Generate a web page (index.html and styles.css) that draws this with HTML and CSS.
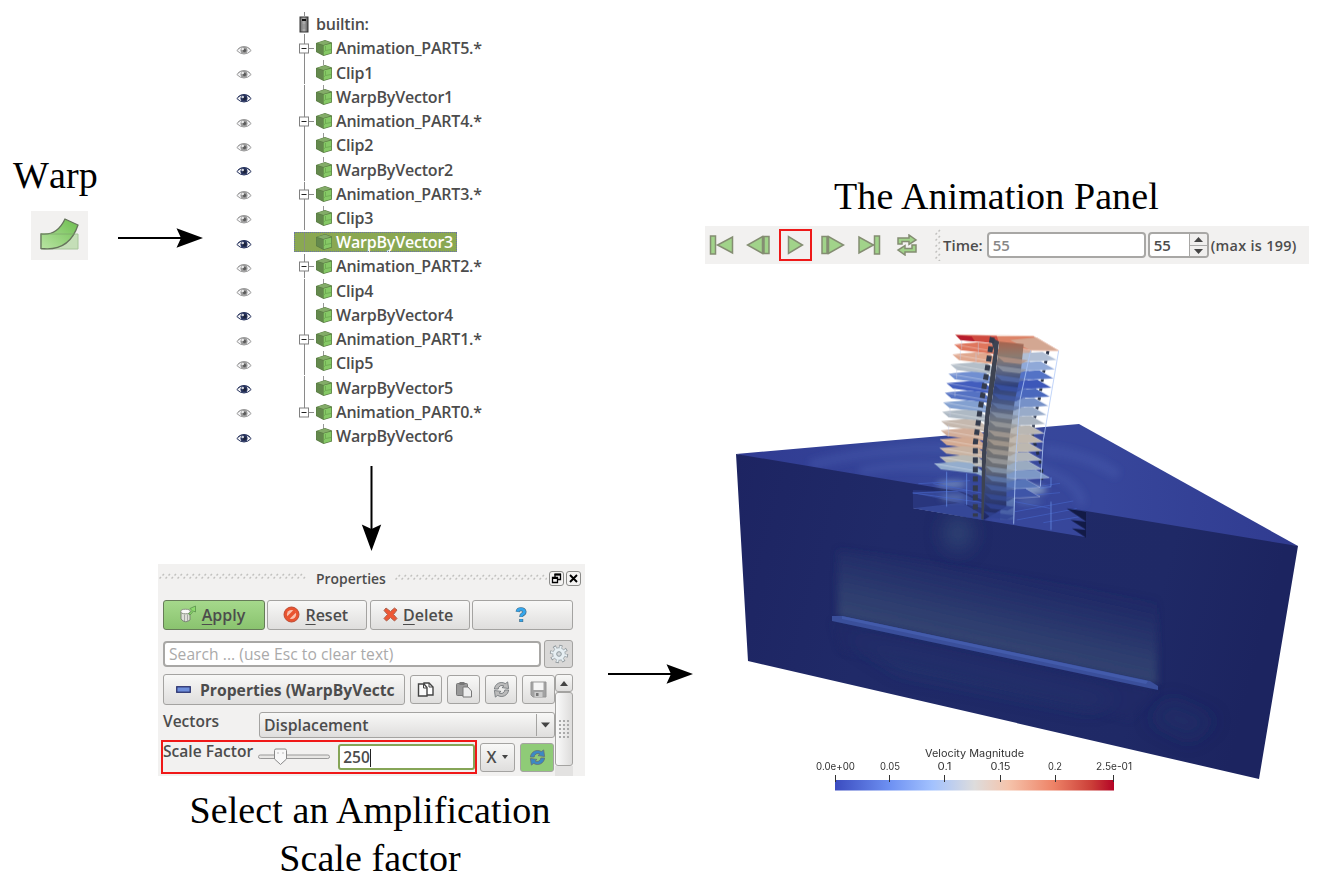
FILE: index.html
```html
<!DOCTYPE html>
<html lang="en">
<head>
<meta charset="utf-8">
<title>Warp and animation workflow</title>
<link rel="stylesheet" href="styles.css">
</head>
<body>
<svg class="defs" aria-hidden="true">
  <defs>
    <linearGradient id="leaf" x1="0" y1="1" x2="1" y2="0"><stop offset="0" stop-color="#b9e5a3"/><stop offset="1" stop-color="#6cbd4e"/></linearGradient>
    <linearGradient id="metal" x1="0" x2="1"><stop offset="0" stop-color="#666"/><stop offset=".5" stop-color="#b5b5b5"/><stop offset="1" stop-color="#555"/></linearGradient>
    <symbol id="eye" viewBox="0 0 16 12"><path d="M.8 6.5Q4 2.600 8 2.600T15.200 6.500Q12 10 8 10T.8 6.500Z" fill="#f5f5f7" stroke="currentColor" stroke-width="1"/><path d="M2 4.800Q8 .2 14 4.800" fill="none" stroke="currentColor" stroke-width=".8"/><circle cx="8" cy="6.300" r="3.500" fill="currentColor"/><circle cx="8.500" cy="6.500" r="1.700" fill="#111" fill-opacity=".45"/><circle cx="6.700" cy="5" r="1.300" fill="#fff" fill-opacity=".8"/></symbol>
    <symbol id="cube" viewBox="0 0 18 18"><path d="M1 4 10 1 17 3.5V14.5L8.5 17 1 13Z" fill="#597a42"/><path d="M1.500 4.500 8 6.500V16L1.500 12.600Z" fill="#64894d"/><path d="M2 4 10 1.600 16 3.700 8.500 6Z" fill="#83ac68"/><path d="M8.600 6.600 16.300 4.400V14L8.600 16.300Z" fill="#86c966"/><path d="M10.500 7V11.500L8.600 13M10.500 11.500 16 10.500" fill="none" stroke="#6aa64e" stroke-width=".8"/></symbol>
    <symbol id="node" viewBox="0 0 21 24.235"><path d="M10.500 0V24.300M15 12.500H20" stroke="#8a8a8a"/><rect x="5.500" y="8" width="9" height="9" fill="#fff" stroke="#808080"/><path d="M7.500 12.500H12.500" stroke="#222" stroke-width="1.200"/></symbol>
    <symbol id="last" viewBox="0 0 21 24.235"><path d="M10.500 0V12M15 12.500H20" stroke="#8a8a8a"/><rect x="5.500" y="8" width="9" height="9" fill="#fff" stroke="#808080"/><path d="M7.500 12.500H12.500" stroke="#222" stroke-width="1.200"/></symbol>
    <symbol id="trunk" viewBox="0 0 21 24.235"><path d="M10.500 0V24.300" stroke="#8a8a8a"/></symbol>
    <symbol id="arrow" viewBox="0 0 86 22"><path d="M0 11H65" stroke="#000" stroke-width="2"/><path d="M85 11 58.500 1.300 63 11 58.500 20.700Z"/></symbol>
    <symbol id="cycle" viewBox="0 0 20 20"><path d="M2.500 9.500A7.500 7.500 0 0 1 14 3.800L16.500 2 17.500 9 10.500 8 12.500 6.300A4 4 0 0 0 6.500 9.500ZM17.500 10.500A7.500 7.500 0 0 1 6 16.200L3.500 18 2.500 11 9.500 12 7.500 13.700A4 4 0 0 0 13.500 10.500Z" fill="currentColor" stroke="#676d70" stroke-width=".8"/></symbol>
  </defs>
</svg>
<main class="figure">
  <section class="flow">
    <div class="sources">
      <div class="warp">
        <h2>Warp</h2>
        <div class="warp-icon"><svg width="57" height="49" viewBox="0 0 57 49"><path d="M10 23H47V38H10Z" fill="#a7d492" fill-opacity=".6" stroke="#a6c59a"/><path d="M10 23Q26 25 34 8L47 14Q38 41 10 37.500Z" fill="url(#leaf)" stroke="#66745c" stroke-width="1.300"/><path d="M10 23H44" stroke="#7fa66c" stroke-opacity=".7"/></svg></div>
      </div>
      <svg class="arrow-tree" width="86" height="22"><use href="#arrow"/></svg>
      <ul class="tree">
        <li class="root"><i></i><span class="node"><svg class="branch" viewBox="0 0 21 24.235"><path d="M10.500 0V4M10.500 22V24.300" stroke="#8a8a8a"/><rect x="6" y="5" width="8" height="15" fill="url(#metal)" stroke="#333"/><path d="M8 8H12" stroke="#111" stroke-width="2"/><path d="M9 12V17M11 12V17" stroke="#888"/></svg><b>builtin:</b></span></li>
        <li><svg class="eye"><use href="#eye"/></svg><span class="node"><svg class="branch"><use href="#node"/></svg><svg class="cube"><use href="#cube"/></svg><b>Animation_PART5.*</b></span></li>
        <li class="sub"><svg class="eye"><use href="#eye"/></svg><span class="node"><svg class="branch"><use href="#trunk"/></svg><svg class="cube"><use href="#cube"/></svg><b>Clip1</b></span></li>
        <li class="sub on"><svg class="eye"><use href="#eye"/></svg><span class="node"><svg class="branch"><use href="#trunk"/></svg><svg class="cube"><use href="#cube"/></svg><b>WarpByVector1</b></span></li>
        <li><svg class="eye"><use href="#eye"/></svg><span class="node"><svg class="branch"><use href="#node"/></svg><svg class="cube"><use href="#cube"/></svg><b>Animation_PART4.*</b></span></li>
        <li class="sub"><svg class="eye"><use href="#eye"/></svg><span class="node"><svg class="branch"><use href="#trunk"/></svg><svg class="cube"><use href="#cube"/></svg><b>Clip2</b></span></li>
        <li class="sub on"><svg class="eye"><use href="#eye"/></svg><span class="node"><svg class="branch"><use href="#trunk"/></svg><svg class="cube"><use href="#cube"/></svg><b>WarpByVector2</b></span></li>
        <li><svg class="eye"><use href="#eye"/></svg><span class="node"><svg class="branch"><use href="#node"/></svg><svg class="cube"><use href="#cube"/></svg><b>Animation_PART3.*</b></span></li>
        <li class="sub"><svg class="eye"><use href="#eye"/></svg><span class="node"><svg class="branch"><use href="#trunk"/></svg><svg class="cube"><use href="#cube"/></svg><b>Clip3</b></span></li>
        <li class="sub on selected"><svg class="eye"><use href="#eye"/></svg><span class="node"><svg class="branch"><use href="#trunk"/></svg><svg class="cube"><use href="#cube"/></svg><b>WarpByVector3</b></span></li>
        <li><svg class="eye"><use href="#eye"/></svg><span class="node"><svg class="branch"><use href="#node"/></svg><svg class="cube"><use href="#cube"/></svg><b>Animation_PART2.*</b></span></li>
        <li class="sub"><svg class="eye"><use href="#eye"/></svg><span class="node"><svg class="branch"><use href="#trunk"/></svg><svg class="cube"><use href="#cube"/></svg><b>Clip4</b></span></li>
        <li class="sub on"><svg class="eye"><use href="#eye"/></svg><span class="node"><svg class="branch"><use href="#trunk"/></svg><svg class="cube"><use href="#cube"/></svg><b>WarpByVector4</b></span></li>
        <li><svg class="eye"><use href="#eye"/></svg><span class="node"><svg class="branch"><use href="#node"/></svg><svg class="cube"><use href="#cube"/></svg><b>Animation_PART1.*</b></span></li>
        <li class="sub"><svg class="eye"><use href="#eye"/></svg><span class="node"><svg class="branch"><use href="#trunk"/></svg><svg class="cube"><use href="#cube"/></svg><b>Clip5</b></span></li>
        <li class="sub on"><svg class="eye"><use href="#eye"/></svg><span class="node"><svg class="branch"><use href="#trunk"/></svg><svg class="cube"><use href="#cube"/></svg><b>WarpByVector5</b></span></li>
        <li><svg class="eye"><use href="#eye"/></svg><span class="node"><svg class="branch"><use href="#last"/></svg><svg class="cube"><use href="#cube"/></svg><b>Animation_PART0.*</b></span></li>
        <li class="sub on"><svg class="eye"><use href="#eye"/></svg><span class="node"><svg class="branch"></svg><svg class="cube"><use href="#cube"/></svg><b>WarpByVector6</b></span></li>
      </ul>
    </div>
    <div class="down"><svg width="22" height="86" viewBox="0 0 22 86"><path d="M10.500 0V65" stroke="#000" stroke-width="2"/><path d="M10.500 85 .8 58.500 10.500 63 20.200 58.500Z"/></svg></div>
    <div class="settings">
      <div class="panel">
        <header><svg class="g1" width="147" height="6"><rect width="147" height="6" fill="url(#dots)"/></svg><b>Properties</b><svg class="g2" width="152" height="6"><defs><pattern id="dots" width="6" height="6" patternUnits="userSpaceOnUse"><path d="M.5 5.500 2 4M3.500 2.500 5 1" stroke="#c2c1bf" stroke-width="1.500"/></pattern></defs><rect width="152" height="6" fill="url(#dots)"/></svg>
          <svg width="15" height="15" viewBox="0 0 15 15"><rect x=".5" y=".5" width="14" height="14" rx="2.500" fill="#f4f3f2" stroke="#8b8b89"/><path d="M6 6V3.500H11.500V8.500H9M3.500 6.500H8.500V11.500H3.500Z" fill="none" stroke="#000" stroke-width="1.300"/><path d="M5.500 3.500H12M3 7H9" stroke="#000" stroke-width="2"/></svg>
          <svg width="15" height="15" viewBox="0 0 15 15"><rect x=".5" y=".5" width="14" height="14" rx="2.500" fill="#f4f3f2" stroke="#8b8b89"/><path d="M4 4 11 11M11 4 4 11" stroke="#000" stroke-width="1.900"/></svg>
        </header>
        <div class="actions">
          <div class="btn apply"><svg width="17" height="20" viewBox="0 0 17 20"><path d="M1 6V14Q5 19 10 15V6" fill="#dde0d8" stroke="#7c8677"/><ellipse cx="5.500" cy="6.500" rx="4.700" ry="2.300" fill="#fafafa" stroke="#8b9385"/><path d="M4.500 9.500V16M7.500 9.500V16" stroke="#a5a5a5"/><path d="M8.500 9 12 5.500 10 3.500 15.500 1V7L13.500 6 10 10Z" fill="#8ddb6c" stroke="#5a914c" stroke-width=".8"/></svg><span><u>A</u>pply</span></div>
          <div class="btn"><svg width="17" height="19" viewBox="0 0 17 19"><circle cx="8.500" cy="8.500" r="7.500" fill="#e9532f" stroke="#bd4b34"/><circle cx="8.500" cy="8.500" r="4.600" fill="#f9c2af"/><path d="M5 12 12 5" stroke="#e9532f" stroke-width="3.500"/></svg><span><u>R</u>eset</span></div>
          <div class="btn"><svg width="15" height="17" viewBox="0 0 15 17"><path d="M3 1 7.500 4.500 11.500 1 14 3 10.500 7.500 14 11.500 11.500 14 7.500 10.500 3.500 14 1 11.500 4.500 7.500 1 3.500Z" fill="#ee5835" stroke="#ac6450"/></svg><span><u>D</u>elete</span></div>
          <div class="btn help"><svg width="12" height="16" viewBox="0 0 12 16"><path d="M2.500 4.800Q3 2.200 6 2.200T9.500 4.700Q9.500 6.500 7.500 7.300 6.200 8 6.200 10M6.200 12V15" fill="none" stroke="#476e87" stroke-width="4"/><path d="M2.500 4.500Q3 2.200 6 2.200T9.500 4.700Q9.500 6.500 7.500 7.300 6.200 8 6.200 9.700M6.200 12.300V14.600" fill="none" stroke="#35a7ed" stroke-width="2.700"/></svg></div>
        </div>
        <div class="search"><div class="field">Search ... (use Esc to clear text)</div><div class="btn gear"><svg width="20" height="20" viewBox="0 0 20 20"><circle cx="10" cy="10" r="7.300" fill="none" stroke="#92999d" stroke-width="3.800" stroke-dasharray="3 2.730"/><circle cx="10" cy="10" r="6.300" fill="#e7eff3" stroke="#a3adb2"/><circle cx="10" cy="10" r="6.800" fill="none" stroke="#e7eff3" stroke-width="3" stroke-dasharray="1.800 3.540" stroke-dashoffset="-.5"/><circle cx="10" cy="10" r="2.300" fill="#d2d7da" stroke="#8e999e"/></svg></div></div>
        <div class="body">
          <div class="form">
            <div class="group-row">
              <div class="btn group"><svg width="15" height="7" viewBox="0 0 15 7"><rect x=".75" y=".75" width="13.500" height="5.500" fill="#6e8edb" stroke="#29316e" stroke-width="1.300"/></svg><b>Properties (WarpByVectc</b></div>
              <div class="btn tool"><svg width="18" height="18" viewBox="0 0 18 18"><path d="M7 2H12L16 6V14H7Z" fill="#fff" stroke="#444" stroke-width="1.400"/><path d="M1.500 3H7L10 6.500V15H1.500Z" fill="#fafafa" stroke="#444" stroke-width="1.400"/><path d="M6.500 3V7H10M12 2V6H16" fill="none" stroke="#444"/></svg></div>
              <div class="btn tool"><svg width="18" height="18" viewBox="0 0 18 18"><rect x="1.500" y="2.500" width="11" height="12" rx="1" fill="#999" stroke="#777"/><rect x="4.500" y="1" width="5" height="3" fill="#777"/><path d="M8 6H13L16.500 10V16H8Z" fill="#eee" stroke="#777"/></svg></div>
              <div class="btn tool dim"><svg width="19" height="19"><use href="#cycle"/></svg></div>
              <div class="btn tool"><svg width="17" height="17" viewBox="0 0 17 17"><path d="M1 1H16V16H3L1 14Z" fill="#a2a2a2" stroke="#959595"/><rect x="3.500" y="1.500" width="10" height="7.500" fill="#f5f5f5"/><rect x="4.500" y="11" width="8" height="5" fill="#ccc"/><rect x="6" y="12" width="2.500" height="3" fill="#777"/></svg></div>
            </div>
            <div class="vectors"><label>Vectors</label><div class="btn combo"><span>Displacement</span><i><svg width="9" height="6"><path d="M0 .5H9L4.500 5.500Z" fill="#444"/></svg></i></div></div>
            <div class="scale">
              <div class="marked"><label>Scale Factor</label><svg width="72" height="20" viewBox="0 0 72 20"><rect x=".5" y="8" width="71" height="3.500" rx="1.700" fill="#e8e7e5" stroke="#999"/><path d="M16.500 3.500Q16.500 2 18 2H27Q28.500 2 28.500 3.500V12L22.500 17.500 16.500 12Z" fill="#f8f8f8" stroke="#888"/><path d="M20 5V7M25 5V7" stroke="#bbb"/></svg><div class="value">250</div></div>
              <div class="btn times"><b>X</b><svg width="6" height="4"><path d="M0 0H6L3 4Z" fill="#444"/></svg></div>
              <div class="btn refresh"><svg width="19" height="19"><use href="#cycle"/></svg></div>
            </div>
          </div>
          <div class="scroll"><div class="btn up"><svg width="8" height="5"><path d="M0 5H8L4 0Z" fill="#444"/></svg></div><div class="btn thumb"><span></span></div><div class="rest"></div></div>
        </div>
      </div>
      <svg class="arrow-view" width="86" height="22"><use href="#arrow"/></svg>
    </div>
    <h2 class="caption">Select an Amplification<br>Scale factor</h2>
  </section>

  <section class="result">
    <h2>The Animation Panel</h2>
    <div class="player">
      <svg width="25" height="22" viewBox="0 0 25 22"><path d="M1.500 2H6.500V20H1.500ZM23.500 3V19L8.500 11Z"/></svg>
      <svg width="25" height="22" viewBox="0 0 25 22"><path d="M16.500 2.500V19.500L1.500 11ZM18 2.500H23V19.500H18Z"/></svg>
      <div class="play"><svg width="17" height="20" viewBox="0 0 17 20"><path d="M1.500 1.500V18.500L15.500 10Z"/></svg></div>
      <svg width="25" height="22" viewBox="0 0 25 22"><path d="M8.500 2.500V19.500L23.500 11ZM2 2.500H7V19.500H2Z"/></svg>
      <svg width="25" height="22" viewBox="0 0 25 22"><path d="M2 3V19L16.500 11ZM17.500 2H22.500V20H17.500Z"/></svg>
      <svg width="22" height="22" viewBox="0 0 22 22"><path d="M2 10V4H13V1L20 6 13 10.500V7.500H6V10ZM20 11V18H9V21L2 16 9 11.500V14.500H16V11Z"/></svg>
      <svg class="vertical" width="6" height="32"><rect width="6" height="32" fill="url(#dots)"/></svg>
      <label>Time:</label><div class="field time">55</div>
      <div class="field spin"><b>55</b><span><i><svg width="9" height="5"><path d="M0 5H9L4.500 0Z" fill="#444"/></svg></i><i><svg width="9" height="5"><path d="M0 0H9L4.500 5Z" fill="#444"/></svg></i></span></div>
      <label>(max is 199)</label>
    </div>
    <svg class="view" width="629" height="500" viewBox="700 300 629 500">
      <defs>
        <linearGradient id="top" x1="0" x2="1"><stop offset="0" stop-color="#303b92"/><stop offset=".4" stop-color="#37489b"/><stop offset=".65" stop-color="#37469b"/><stop offset="1" stop-color="#303b90"/></linearGradient>
        <linearGradient id="front" x1="0" x2="1" y2=".15"><stop offset="0" stop-color="#1d2462"/><stop offset=".3" stop-color="#202a68"/><stop offset=".8" stop-color="#1f2966"/><stop offset="1" stop-color="#1c2460"/></linearGradient>
        <linearGradient id="glow" gradientUnits="userSpaceOnUse" x1="990" y1="655" x2="1010" y2="565"><stop offset="0" stop-color="#354671"/><stop offset=".35" stop-color="#304070" stop-opacity=".85"/><stop offset=".7" stop-color="#29376d" stop-opacity=".5"/><stop offset="1" stop-color="#212b67" stop-opacity="0"/></linearGradient>
        <linearGradient id="core" x1="0" y1="0" x2="0" y2="1"><stop offset="0" stop-color="#a7644e"/><stop offset=".08" stop-color="#8d7b70"/><stop offset=".15" stop-color="#646c83"/><stop offset=".25" stop-color="#2e407c"/><stop offset=".34" stop-color="#475783"/><stop offset=".43" stop-color="#6d7481"/><stop offset=".57" stop-color="#777472"/><stop offset=".7" stop-color="#6b6f76"/><stop offset=".8" stop-color="#3d4c7b"/><stop offset="1" stop-color="#1c2664"/></linearGradient>
        <linearGradient id="infill" x1="0" y1="0" x2="0" y2="1"><stop offset="0" stop-color="#dca48b"/><stop offset=".1" stop-color="#b7b9c2"/><stop offset=".24" stop-color="#4560bb"/><stop offset=".34" stop-color="#5875bf"/><stop offset=".46" stop-color="#9fadc0"/><stop offset=".6" stop-color="#bdb6ad"/><stop offset=".73" stop-color="#aeb3b6"/><stop offset=".85" stop-color="#6681b8"/><stop offset="1" stop-color="#3e549f"/></linearGradient>
        <linearGradient id="bar"><stop offset="0" stop-color="#3b4cc0"/><stop offset=".2" stop-color="#6f92f3"/><stop offset=".35" stop-color="#a3c2fe"/><stop offset=".5" stop-color="#dddcdc"/><stop offset=".62" stop-color="#f5c4ac"/><stop offset=".78" stop-color="#ee8468"/><stop offset=".92" stop-color="#cb3e38"/><stop offset="1" stop-color="#b40426"/></linearGradient>
        <filter id="soft" x="-30%" y="-30%" width="160%" height="160%"><feGaussianBlur stdDeviation="9"/></filter>
        <filter id="edge" x="-5%" y="-15%" width="110%" height="130%"><feGaussianBlur stdDeviation="3.500"/></filter>
        <clipPath id="soil"><path d="M736 454 1079 424 1298 546 1259 779 748 661Z"/></clipPath>
        <g id="wing"><path d="M0 0 70-6 112-2 150 26 150 40 125 30 20 17Z"/><path d="M0 0 150 26" fill="none" stroke="#fff" stroke-opacity=".5" stroke-width="2"/></g>
        <g id="fin"><path d="M0 0-42-24-110-20-150-13-120 3-60 4Z"/><path d="M0 0-60 4-120 3M0 0-42-24" fill="none" stroke="#eef2ff" stroke-opacity=".5" stroke-width="2"/></g>
        <path id="lip" d="M0 0 92 13 70 24 20 18Z"/>
      </defs>
      <path d="M736 454 1079 424 1298 546 1086 540 983 522 900 500Z" fill="url(#top)"/>
      <g clip-path="url(#soil)"><g filter="url(#edge)" fill="none" stroke="#5068b5" stroke-opacity=".3"><path d="M810 465Q880 447 950 448M1045 450Q1090 455 1118 475" stroke-width="10"/><path d="M860 471Q900 463 950 467M1035 468Q1080 480 1082 505" stroke-width="9"/></g></g>
      <path d="M736 454 963 492 913 493V508L983 520 1085 537 1086 511 1298 546 1259 779 748 661Z" fill="url(#front)"/>
      <g clip-path="url(#soil)"><g filter="url(#soft)"><ellipse cx="958" cy="533" rx="15" ry="18" fill="#334875" opacity=".75"/><path d="M846 635 1120 698 1090 708 900 670Z" fill="#293a70" opacity=".6"/><path d="M1170 700 1215 720 1190 740 1150 720Z" fill="#26346a" opacity=".5"/></g></g>
      <path d="M838 550Q925 560 1157 600V685L838 617Z" fill="url(#glow)" filter="url(#edge)"/>
      <path d="M832 621 1158 690 1130 720 840 650Z" fill="#202a67" opacity=".5" filter="url(#edge)"/>
      <path d="M832 616H842L1150 681 1158 686V690L832 621Z" fill="#3a4f9b"/><path d="M842 616 1148 681 1146 684 842 619Z" fill="#435bab"/>
      <path d="M913 490 963 492 983 500V520L913 508Z" fill="#29367d"/>
      <g transform="translate(900 320) scale(.33333)">
        <path d="M38 519 170 512 250 550V565ZM38 565 185 548 250 585V600Z" fill="#354797"/>
        <g filter="url(#soft)"><ellipse cx="155" cy="492" rx="45" ry="7" fill="#9bbad6" opacity=".8"/><ellipse cx="160" cy="533" rx="40" ry="6" fill="#8ba8cc" opacity=".7"/><ellipse cx="395" cy="510" rx="45" ry="9" fill="#b5cfdf" opacity=".9"/><ellipse cx="385" cy="545" rx="40" ry="6" fill="#7392c5" opacity=".6"/></g>
        <path d="M55 491 210 482M38 519 200 512M100 491 250 520M38 519 250 548M345 510 480 490M350 530 480 518M345 575 520 543M350 600 530 566M430 608 540 590M345 545 450 565" fill="none" stroke="#4664c6" stroke-width="2.500" opacity=".8"/>
        <path d="M500 565 558 574V604ZM512 600 558 605V629ZM516 625 558 630V653Z" fill="#121a46"/>
        <!-- Rear columns and floor slabs -->
        <path d="M444 92 430 160 418 235 402 300 397 345 425 440V480" fill="none" stroke="#263047" stroke-width="9" stroke-dasharray="11 17"/>
        <path d="M362 75 395 90 375 240 358 340 350 460 342 600 300 600 310 340Z" fill="url(#infill)"/>
        <g>
          <use href="#fin" x="470" y="120" fill="#b1bfd5"/><use href="#fin" x="465" y="148" fill="#90a9d8"/><use href="#fin" x="461" y="175" fill="#5473c6"/><use href="#fin" x="455" y="203" fill="#3d57b9"/><use href="#fin" x="450" y="230" fill="#4a68bd"/><use href="#fin" x="445" y="258" fill="#7691c8"/><use href="#fin" x="440" y="285" fill="#98abc9"/><use href="#fin" x="436" y="312" fill="#aab4c1"/><use href="#fin" x="432" y="340" fill="#bab7b3"/><use href="#fin" x="430" y="366" fill="#c1b8ae"/><use href="#fin" x="427" y="392" fill="#bdb8b0"/><use href="#fin" x="425" y="420" fill="#b1b6bb"/><use href="#fin" x="425" y="447" fill="#9aabc1"/><use href="#fin" x="448" y="473" fill="#7d98c6"/><use href="#fin" x="420" y="502" fill="#5674b8"/><use href="#fin" x="420" y="530" fill="#3e55a8"/>
        </g>
        <g>
          <use href="#wing" x="162" y="73" fill="#df765d"/><use href="#wing" x="157" y="103" fill="#e0a78e"/><use href="#wing" x="151" y="133" fill="#b4bec8"/><use href="#wing" x="145" y="161" fill="#718fd1"/><use href="#wing" x="139" y="189" fill="#425dbe"/><use href="#wing" x="134" y="218" fill="#5572c3"/><use href="#wing" x="129" y="247" fill="#83a0d0"/><use href="#wing" x="126" y="275" fill="#aeb9c4"/><use href="#wing" x="123" y="303" fill="#c5b8ae"/><use href="#wing" x="122" y="331" fill="#d1ad99"/><use href="#wing" x="120" y="358" fill="#d3aa92"/><use href="#wing" x="119" y="384" fill="#c9b3a2"/><use href="#wing" x="119" y="411" fill="#b9b9b5"/><use href="#wing" x="103" y="431" fill="#94adcd"/>
        </g>
        <path d="M275 48 400 48 476 92 392 91 298 71Z" fill="#dc8367"/><path d="M166 44 290 47 298 72 250 66 182 60Z" fill="#cf4a3f"/><path d="M166 44 215 50 225 64 182 60Z" fill="#b71c2c"/><path d="M330 60 410 52 476 92 392 91Z" fill="#d3a792"/>
        <path d="M166 44 400 48 476 92 392 91 298 71" fill="none" stroke="#f0c9b9" stroke-width="2"/>
        <path d="M270 50 297 65 285 180 270 280 259 400 251 600 244 597 246 400 256 280 272 160 282 90Z" fill="#3d4352"/>
        <path d="M277 52 258 170 240 270 226 370 226 590" fill="none" stroke="#343b4c" stroke-width="15" stroke-dasharray="17 11"/>
        <path d="M298 65 371 72 362 160 344 245 329 350 320 450 319 560 251 600 259 400 270 280 285 180Z" fill="url(#core)"/>
        <g fill-opacity=".8">
          <use href="#lip" x="292" y="108" fill="#b59283"/><use href="#lip" x="289" y="136" fill="#8e95a2"/><use href="#lip" x="285" y="164" fill="#526aa9"/><use href="#lip" x="281" y="192" fill="#3851a5"/><use href="#lip" x="278" y="220" fill="#3e57a4"/><use href="#lip" x="274" y="248" fill="#6077a6"/><use href="#lip" x="270" y="275" fill="#8491a5"/><use href="#lip" x="267" y="302" fill="#9a9b9c"/><use href="#lip" x="264" y="330" fill="#a69c93"/><use href="#lip" x="262" y="357" fill="#a99c90"/><use href="#lip" x="260" y="384" fill="#a29b94"/><use href="#lip" x="258" y="411" fill="#9b9c9d"/><use href="#lip" x="257" y="438" fill="#8797ad"/><use href="#lip" x="256" y="465" fill="#5f79ad"/><use href="#lip" x="254" y="492" fill="#455d9f"/><use href="#lip" x="253" y="520" fill="#364b95"/><use href="#lip" x="252" y="548" fill="#314494"/><use href="#lip" x="251" y="574" fill="#314494"/>
        </g>
        <path d="M476 92 430 360 421 500M392 91 360 240 348 400 341 612" fill="none" stroke="#b0c9f7" stroke-width="3" stroke-opacity=".8"/><path d="M140 455V560M200 460V555M453 472V500L420 505M453 545V630" fill="none" stroke="#6288e0" stroke-width="3" stroke-opacity=".8"/>
        <path d="M185 60V88M235 66V105M181 92V120M228 98V130M170 145V176M165 205V230M150 262V290M146 315V350" stroke="#c5cbe3" stroke-width="2" opacity=".7"/>
      </g>
      <g class="legend"><text x="925" y="757" textLength="99" lengthAdjust="spacingAndGlyphs">Velocity Magnitude</text><text x="816" y="770" textLength="39" lengthAdjust="spacingAndGlyphs">0.0e+00</text><text x="880" y="770" textLength="20" lengthAdjust="spacingAndGlyphs">0.05</text><text x="937.500" y="770" textLength="14" lengthAdjust="spacingAndGlyphs">0.1</text><text x="990.500" y="770" textLength="20" lengthAdjust="spacingAndGlyphs">0.15</text><text x="1048" y="770" textLength="14" lengthAdjust="spacingAndGlyphs">0.2</text><text x="1096" y="770" textLength="36" lengthAdjust="spacingAndGlyphs">2.5e-01</text></g>
      <rect x="835" y="780" width="279" height="10.500" fill="url(#bar)"/><path d="M835.500 775V782M889.500 775V782M944.500 775V782M1000.500 775V782M1055.500 775V782M1113.500 775V782" stroke="#333"/>
    </svg>
  </section>
</main>
</body>
</html>
```
FILE: styles.css
```css
* { box-sizing: border-box; }
body { margin: 0; background: #fff; font-family: "Open Sans", "Noto Sans", sans-serif; color: #4c4c4c; }
svg { display: block; flex: none; }
h2 { margin: 0; font: 400 38px/42px "Liberation Serif", serif; letter-spacing: .1px; color: #000; white-space: nowrap; }
b, label { font-weight: 600; white-space: nowrap; }
.defs { position: absolute; width: 0; height: 0; }
.figure { width: 1329px; height: 888px; display: grid; grid-template-columns: 700px 629px; overflow: hidden; }

.sources { height: 456px; display: flex; align-items: flex-start; }
.warp { width: 118px; padding: 154px 0 0 13px; }
.warp h2 { font-kerning: none; }
.warp-icon { margin: 15px 0 0 18px; width: 57px; height: 49px; background: #f2f1f0; }
.arrow-tree { margin-top: 227px; }
.tree { list-style: none; margin: 0; padding: 12px 0 0 32px; font-size: 16px; letter-spacing: -.2px; }
.tree li { height: 24.235px; display: flex; align-items: center; }
.tree li > i { width: 16px; }
.eye { width: 16px; height: 12px; color: #9a9a9a; margin-top: 3px; }
.on .eye { color: #26325c; }
.node { height: 24.235px; display: flex; align-items: center; margin-left: 42px; line-height: 20px; }
.branch { width: 21px; height: 24.235px; }
.cube { width: 18px; height: 18px; margin-right: 3px; }
.sub .node { background: linear-gradient(#999, #999) 29px 0 / 1px 5px no-repeat; }
.root b { margin-left: 1px; }
.tree .selected .node { background: #8aa852; height: 20px; width: 163px; outline: 1px dotted #696faf; outline-offset: -1px; color: #fff; }
.selected .branch { height: 20px; }

.down { height: 108px; padding: 10px 0 0 361px; }
.settings { height: 222px; display: flex; padding-left: 158px; }
.panel { width: 427px; height: 212px; background: #f2f1f0; padding: 0 12px 0 5px; overflow: hidden; }
.arrow-view { margin: 99px 0 0 23px; }
.caption { width: 740px; line-height: 48px; text-align: center; }
.panel header { height: 36px; display: flex; align-items: center; margin: 0 -8px 0 -4px; padding-bottom: 8px; font-size: 13.9px; }
.g1 { margin-top: -4px; margin-right: 10px; }
.g2 { margin-left: auto; margin-right: 2px; margin-top: -2px; }
.panel header svg:last-child { margin-left: 2px; }
.btn { display: flex; align-items: center; justify-content: center; border: 1.5px solid #a4a3a1; border-radius: 3px; background: linear-gradient(#f8f8f7, #dfdedd); }
.actions { display: grid; grid-template-columns: 102px 100px 100px 101px; gap: 2.3px; font-weight: 600; font-size: 16px; height: 30px; }
.actions .btn { gap: 5px; padding-right: 3px; }
.actions u { text-underline-offset: 3px; text-decoration-thickness: 1px; }
.actions .apply { background: linear-gradient(#a5d98b, #8ac36f); border-color: #667c58; }
.search { display: flex; gap: 3px; margin-top: 10px; height: 27px; align-items: center; }
.field { background: #fff; border: 2px solid #a8a7a5; border-radius: 4px; height: 26px; display: flex; align-items: center; padding-left: 4px; }
.search .field { width: 378px; font-size: 15.6px; color: #aaa; font-weight: 500; letter-spacing: .05px; }
.gear { width: 29px; height: 28px; background: #d9d8d7; }
.body { display: flex; margin-top: 7px; }
.form { width: 392px; }
.group-row { display: flex; height: 31px; align-items: center; gap: 4.8px; }
.group { width: 242px; height: 31px; justify-content: flex-start; padding-left: 12px; gap: 9px; font-size: 15.7px; overflow: hidden; }
.group b { font-weight: 700; }
.tool { width: 32.7px; height: 29px; }
.dim { color: #bbb; }
.vectors { display: flex; margin-top: 7px; height: 26px; font-size: 15.5px; }
.vectors label { width: 96px; line-height: 19px; }
.combo { flex: 1; padding-left: 4px; justify-content: space-between; font-weight: 600; font-size: 15.8px; }
.combo i { width: 18px; height: 22px; border-left: 1px solid #a4a3a1; display: flex; align-items: center; justify-content: center; }
.scale { display: flex; align-items: center; margin-top: 2px; height: 34px; }
.marked { width: 316px; height: 34px; flex: none; margin-left: -2px; border: 2px solid #f01818; display: flex; align-items: center; }
.marked label { width: 96px; font-size: 15.6px; line-height: 20px; margin-top: -12px; }
.value { margin-left: 8px; width: 138px; height: 26px; border: 2px solid #86a557; border-radius: 3px; background: #fff; font-weight: 600; font-size: 15.5px; line-height: 22px; padding-left: 3px; }
.value::after { content: ""; display: inline-block; width: 1px; height: 18px; background: #222; vertical-align: -4px; }
.times { width: 35px; height: 29px; margin-left: 3px; gap: 6px; font-size: 16px; }
.refresh { width: 34px; height: 29px; margin-left: 5px; background: #8fcb77; color: #3c89c5; }
.scroll { width: 18px; }
.up { height: 18px; }
.thumb { height: 74px; background: linear-gradient(90deg, #fafafa, #dddcdb); }
.thumb span { width: 13px; height: 20px; background: radial-gradient(#aaa 1px, transparent 1.2px) 0 0 / 4px 4px; }
.rest { height: 12px; background: #e3e2e1; }

.result { display: flex; flex-direction: column; }
.result h2 { margin: 175px 0 0 134px; height: 51px; }
.player { width: 604px; height: 38px; margin-left: 5px; background: #f2f1f0; display: flex; align-items: center; padding-left: 4px; font-size: 15px; white-space: nowrap; }
.player > svg, .play svg { fill: #a1d38a; stroke: #848d72; stroke-width: 1.5; margin-right: 12px; }
.player > svg:nth-child(2) { margin-right: 8px; }
.player .play { width: 33px; height: 32px; border: 2px solid #ee1919; margin-right: 8px; display: flex; justify-content: center; align-items: center; }
.play svg { margin: 0; }
.player > svg:nth-child(5) { margin-right: 14px; }
.player > .vertical { stroke: none; margin: 0 2px 0 5px; }
.time { width: 159px; margin: 0 2px 0 4px; color: #888; font-weight: 600; font-size: 15px; }
.spin { width: 61px; padding: 0 0 0 4px; justify-content: space-between; margin-right: 2px; font-size: 15px; overflow: hidden; }
.spin span { width: 18px; border-left: 1px solid #a8a7a5; height: 22px; background: #f0efee; }
.spin i { height: 11px; display: flex; align-items: center; justify-content: center; }
.spin i + i { border-top: 1px solid #aaa; }
.player label:last-child { font-size: 14.4px; letter-spacing: .3px; }
.view { margin-top: 36px; }
.legend text { font: 400 10.5px Inter, sans-serif; fill: #333; }
```
